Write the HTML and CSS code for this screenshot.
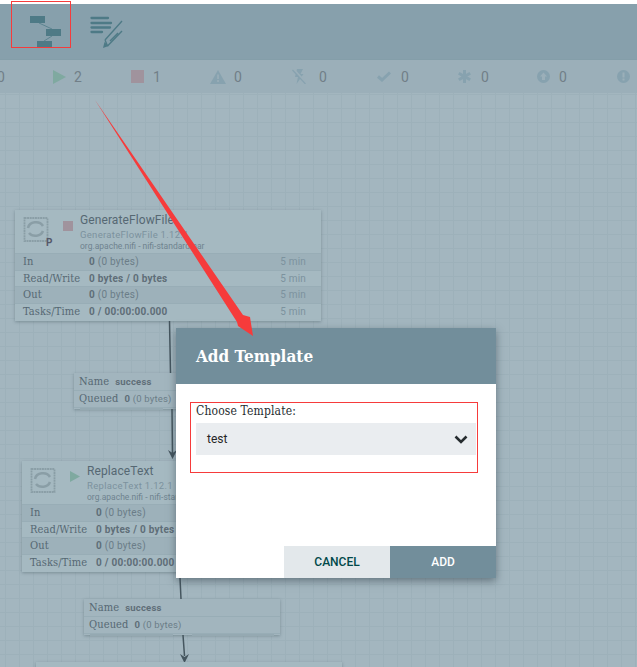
FILE: index.html
```html
<!DOCTYPE html>
<html lang="en">
<head>
  <meta charset="UTF-8">
  <meta name="viewport" content="width=device-width, initial-scale=1.0">
  <title>Add Template</title>
  <link rel="stylesheet" href="styles.css">
</head>
<body>
  <div class="page">
    <header class="toolbar">
      <svg class="tool-icon" width="32" height="32" viewBox="0 0 32 32">
        <path d="M9 7L22 13M22 20L14 25" stroke="#5c8490" stroke-width="1" fill="none"/>
        <rect x="0" y="0" width="15" height="7" fill="#4e7a86"/>
        <rect x="16" y="13" width="15" height="7" fill="#4e7a86"/>
        <rect x="7" y="25" width="15" height="6" fill="#4e7a86"/>
      </svg>
      <svg class="tool-icon" width="34" height="32" viewBox="0 0 34 32">
        <path d="M1.500 2H18M1.500 7H21M1.500 11.500H20M1.500 16H12" stroke="#4e7a86" stroke-width="2.300" stroke-linecap="round"/>
        <path d="M15 24L32 5M17.500 30L32 15M20 25L28 17M15 24L17.500 30" stroke="#4e7a86" stroke-width="1.400" fill="none"/>
        <path d="M13 32L14.500 26L18.500 30Z" fill="#4e7a86"/>
      </svg>
    </header>

    <div class="status">
      <div class="stat"><span>0</span></div>
      <div class="stat">
        <svg width="13" height="14" viewBox="0 0 13 14"><path d="M0 0L13 7L0 14Z" fill="#7fa9a0"/></svg><span>2</span>
      </div>
      <div class="stat">
        <svg width="13" height="13" viewBox="0 0 13 13"><rect width="13" height="13" fill="#a0939d"/></svg><span>1</span>
      </div>
      <div class="stat">
        <svg width="16" height="14" viewBox="0 0 16 14"><path d="M8 0L16 14H0Z" fill="#87a2af"/><path d="M7.200 4.500H8.800V9H7.200ZM7.200 10H8.800V12H7.200Z" fill="#9bafb9"/></svg><span>0</span>
      </div>
      <div class="stat">
        <svg width="14" height="15" viewBox="0 0 14 15"><path d="M5 0H11L8.500 5H11.500L4.500 15L6 8H3Z" fill="#87a2af"/><path d="M1 0L14 14" stroke="#9bafb9" stroke-width="2.500"/><path d="M.5 1L13.500 15" stroke="#87a2af" stroke-width="1.200"/></svg><span>0</span>
      </div>
      <div class="stat">
        <svg width="14" height="11" viewBox="0 0 14 11"><path d="M1 5.500L5 9L13 1.500" stroke="#87a2af" stroke-width="3" fill="none"/></svg><span>0</span>
      </div>
      <div class="stat">
        <svg width="13" height="13" viewBox="0 0 13 13"><path d="M6.500 0V13M.8 3.200L12.200 9.800M12.200 3.200L.8 9.800" stroke="#87a2af" stroke-width="3"/></svg><span>0</span>
      </div>
      <div class="stat">
        <svg width="13" height="13" viewBox="0 0 13 13"><circle cx="6.500" cy="6.500" r="6.500" fill="#87a2af"/><path d="M6.500 2.500L10 6.500H8V10H5V6.500H3Z" fill="#9bafb9"/></svg><span>0</span>
      </div>
      <div class="stat">
        <svg width="13" height="13" viewBox="0 0 13 13"><circle cx="6.500" cy="6.500" r="6.500" fill="#87a2af"/><path d="M5.500 2.500H7.500V7.500H5.500ZM5.500 8.500H7.500V10.500H5.500Z" fill="#9bafb9"/></svg>
      </div>
    </div>

    <main class="canvas">
      <svg class="links" width="637" height="574" viewBox="0 93 637 574">
        <path d="M169.500 321L170.500 373M172 409L172.500 456M180 578L181 599M183 635L184.500 656" stroke="#45565f" stroke-width="1.500" fill="none"/>
        <path d="M168 450L172.500 459L177 450L172.500 453Z" fill="#45565f"/>
        <path d="M180 654L184.500 663L189 654L184.500 657Z" fill="#45565f"/>
      </svg>

      <section class="node node-generate">
        <div class="node-head">
          <svg class="proc-icon" width="26" height="26" viewBox="0 0 26 26">
            <rect x="1.500" y="1" width="23" height="23" fill="none" stroke="#8a9ea6" stroke-width="1.800" stroke-dasharray="2 .6"/>
            <path d="M5 11A8 7 0 0 1 20 9M20 14A8 7 0 0 1 6 16" stroke="#8a9ea6" stroke-width="2.500" fill="none"/>
          </svg>
          <span class="proc-p">P</span>
          <i class="run-stop"></i>
          <div class="node-names">
            <div class="node-name">GenerateFlowFile</div>
            <div class="node-type">GenerateFlowFile 1.12.1</div>
            <div class="node-bundle">org.apache.nifi - nifi-standard-nar</div>
          </div>
        </div>
        <div class="row row-dark"><span class="k">In</span><span class="v"><b>0</b> (0 bytes)</span><span class="t">5 min</span></div>
        <div class="row"><span class="k">Read/Write</span><span class="v"><b>0 bytes / 0 bytes</b></span><span class="t">5 min</span></div>
        <div class="row row-dark"><span class="k">Out</span><span class="v"><b>0</b> (0 bytes)</span><span class="t">5 min</span></div>
        <div class="row"><span class="k">Tasks/Time</span><span class="v"><b>0 / 00:00:00.000</b></span><span class="t">5 min</span></div>
      </section>

      <section class="conn conn-one">
        <div class="conn-row"><span class="k">Name</span><b>success</b></div>
        <div class="conn-row"><span class="k">Queued</span><span class="v"><b>0</b> (0 bytes)</span></div>
        <div class="conn-bars"><i></i><i></i></div>
      </section>

      <section class="node node-replace">
        <div class="node-head">
          <svg class="proc-icon" width="26" height="26" viewBox="0 0 26 26">
            <rect x="1.500" y="1" width="23" height="23" fill="none" stroke="#8a9ea6" stroke-width="1.800" stroke-dasharray="2 .6"/>
            <path d="M5 11A8 7 0 0 1 20 9M20 14A8 7 0 0 1 6 16" stroke="#8a9ea6" stroke-width="2.500" fill="none"/>
          </svg>
          <svg class="run-play" width="10" height="11" viewBox="0 0 10 11"><path d="M0 0L10 5.500L0 11Z" fill="#7fa9a0"/></svg>
          <div class="node-names">
            <div class="node-name">ReplaceText</div>
            <div class="node-type">ReplaceText 1.12.1</div>
            <div class="node-bundle">org.apache.nifi - nifi-standard-nar</div>
          </div>
        </div>
        <div class="row row-dark"><span class="k">In</span><span class="v"><b>0</b> (0 bytes)</span><span class="t">5 min</span></div>
        <div class="row"><span class="k">Read/Write</span><span class="v"><b>0 bytes / 0 bytes</b></span><span class="t">5 min</span></div>
        <div class="row row-dark"><span class="k">Out</span><span class="v"><b>0</b> (0 bytes)</span><span class="t">5 min</span></div>
        <div class="row"><span class="k">Tasks/Time</span><span class="v"><b>0 / 00:00:00.000</b></span><span class="t">5 min</span></div>
      </section>

      <section class="conn conn-two">
        <div class="conn-row"><span class="k">Name</span><b>success</b></div>
        <div class="conn-row"><span class="k">Queued</span><span class="v"><b>0</b> (0 bytes)</span></div>
        <div class="conn-bars"><i></i><i></i></div>
      </section>

      <section class="node node-next"></section>
    </main>

    <div class="dialog">
      <h2 class="dialog-title">Add Template</h2>
      <div class="dialog-body">
        <label class="field-label">Choose Template:</label>
        <div class="select">
          <span>test</span>
          <svg width="14" height="9" viewBox="0 0 14 9"><path d="M1.500 1.500L7 7L12.500 1.500" stroke="#262c2f" stroke-width="2.600" fill="none"/></svg>
        </div>
      </div>
      <div class="dialog-actions">
        <button class="btn btn-cancel">CANCEL</button>
        <button class="btn btn-add">ADD</button>
      </div>
    </div>

    <div class="mark mark-tool"></div>
    <div class="mark mark-field"></div>
    <svg class="red-arrow" width="637" height="667" viewBox="0 0 637 667">
      <path d="M95 100L243 315L250 317L253 336L238 326L237 322Z" fill="#f63b3b"/>
    </svg>
  </div>
</body>
</html>
```

FILE: styles.css
```css
html,body{margin:0;padding:0;}
body{font-family:Roboto,"Liberation Sans",sans-serif;background:#a3b6bf;}
.page{position:relative;width:637px;height:667px;overflow:hidden;display:flex;flex-direction:column;background:#fff;padding-top:4px;box-sizing:border-box;}

.toolbar{height:56px;flex:none;background:#87a0ac;display:flex;align-items:flex-start;box-sizing:border-box;padding:12px 0 0 30px;gap:28px;}
.tool-icon{display:block;}

.status{height:33px;flex:none;background:#9bafb9;display:flex;align-items:center;margin-left:-26px;box-sizing:border-box;box-shadow:0 1px 2px rgba(70,90,100,.35);position:relative;}
.stat{width:79px;flex:none;display:flex;align-items:center;gap:9px;font-size:14px;color:#717f88;}
.stat:nth-child(1){padding-left:23px;box-sizing:border-box;}
.stat:nth-child(2){width:78px;gap:8px;}
.stat:nth-child(4){width:82px;gap:8px;}
.stat:nth-child(5){width:85px;gap:13px;}
.stat:nth-child(6){width:81px;gap:10px;}
.stat:nth-child(7){gap:10px;}
.stat:nth-child(8){width:80px;}

.canvas{position:relative;flex:1;background-color:#a3b6bf;background-image:linear-gradient(#9db1ba 1px,transparent 1px),linear-gradient(90deg,#9db1ba 1px,transparent 1px);background-size:14px 14px;background-position:5px 1px;}
.links{position:absolute;left:0;top:0;}

.node{position:absolute;width:306px;height:111px;background:#a5b9c1;box-shadow:0 1px 3px rgba(60,80,90,.4);}
.node-generate{left:15px;top:117px;}
.node-replace{left:22px;top:368px;}
.node-next{left:36px;top:569px;height:60px;}
.node-head{height:43px;position:relative;}
.proc-icon{position:absolute;left:8px;top:7px;}
.proc-p{position:absolute;left:31px;top:27px;font-size:10px;font-weight:700;color:#55586a;}
.run-stop{position:absolute;left:48px;top:11px;width:10px;height:10px;background:#a0939d;}
.run-play{position:absolute;left:48px;top:10px;}
.node-names{position:absolute;left:65px;top:3px;}
.node-name{font-size:12px;letter-spacing:.1px;line-height:15px;color:#566873;}
.node-type{font-size:9.5px;line-height:13px;color:#7c929e;letter-spacing:.3px;}
.node-bundle{font-size:8.5px;line-height:10px;color:#6f838f;}

.row{height:16.5px;display:flex;align-items:center;font-size:10px;color:#6b7d88;box-sizing:border-box;padding:0 15px 0 8px;border-top:1px solid #98adb6;}
.row-dark{background:#9db1ba;}
.k{font-family:"DejaVu Serif Condensed","DejaVu Serif",serif;font-size:11px;letter-spacing:.1px;color:#566873;}
.row .k{width:66px;flex:none;white-space:nowrap;}
.v b{font-weight:700;color:#5f6e78;}
.row .v{flex:1;letter-spacing:.25px;font-size:10px;}
.t{color:#7c929e;font-size:10px;letter-spacing:.2px;}

.conn{position:absolute;width:196px;height:36px;background:#a2b5be;box-shadow:0 1px 3px rgba(60,80,90,.4);}
.conn-one{left:74px;top:280px;}
.conn-two{left:84px;top:506px;}
.conn-row{height:16.5px;display:flex;align-items:center;gap:6px;padding-left:5px;font-size:9.5px;color:#6b7d88;border-bottom:1px solid #98adb6;letter-spacing:.2px;}
.conn-row b{color:#5f6e78;}
.conn-bars{display:flex;gap:19px;padding:0 6px;}
.conn-bars i{display:block;flex:1;height:2px;background:#95a9b2;}

.dialog{position:absolute;left:176px;top:328px;width:320px;height:250px;background:#fff;display:flex;flex-direction:column;box-shadow:0 3px 8px rgba(40,55,65,.5);}
.dialog-title{margin:0;height:56px;flex:none;background:#728e9b;color:#fff;font-family:"DejaVu Serif Condensed","DejaVu Serif",serif;font-size:17px;font-weight:700;line-height:57px;padding-left:20px;box-sizing:border-box;}
.dialog-body{flex:1;padding:20px 20px 0;}
.field-label{display:block;font-family:"DejaVu Serif Condensed","DejaVu Serif",serif;font-size:12px;letter-spacing:.15px;line-height:14px;color:#262c2f;margin-bottom:5px;}
.select{height:32px;background:#eaedf0;display:flex;align-items:center;justify-content:space-between;padding:0 8px 0 11px;font-size:12px;color:#262626;}
.dialog-actions{height:32px;flex:none;display:flex;justify-content:flex-end;}
.btn{width:106px;border:0;margin:0;padding:0;font-family:Roboto,"Liberation Sans",sans-serif;font-size:12px;font-weight:500;}
.btn-cancel{background:#e3e8eb;color:#004849;}
.btn-add{background:#728e9b;color:#fff;}

.mark{position:absolute;border:1px solid #f63b3b;box-sizing:border-box;}
.mark-tool{left:11px;top:1px;width:60px;height:47px;}
.mark-field{left:190px;top:402px;width:288px;height:71px;}
.red-arrow{position:absolute;left:0;top:0;}
```
